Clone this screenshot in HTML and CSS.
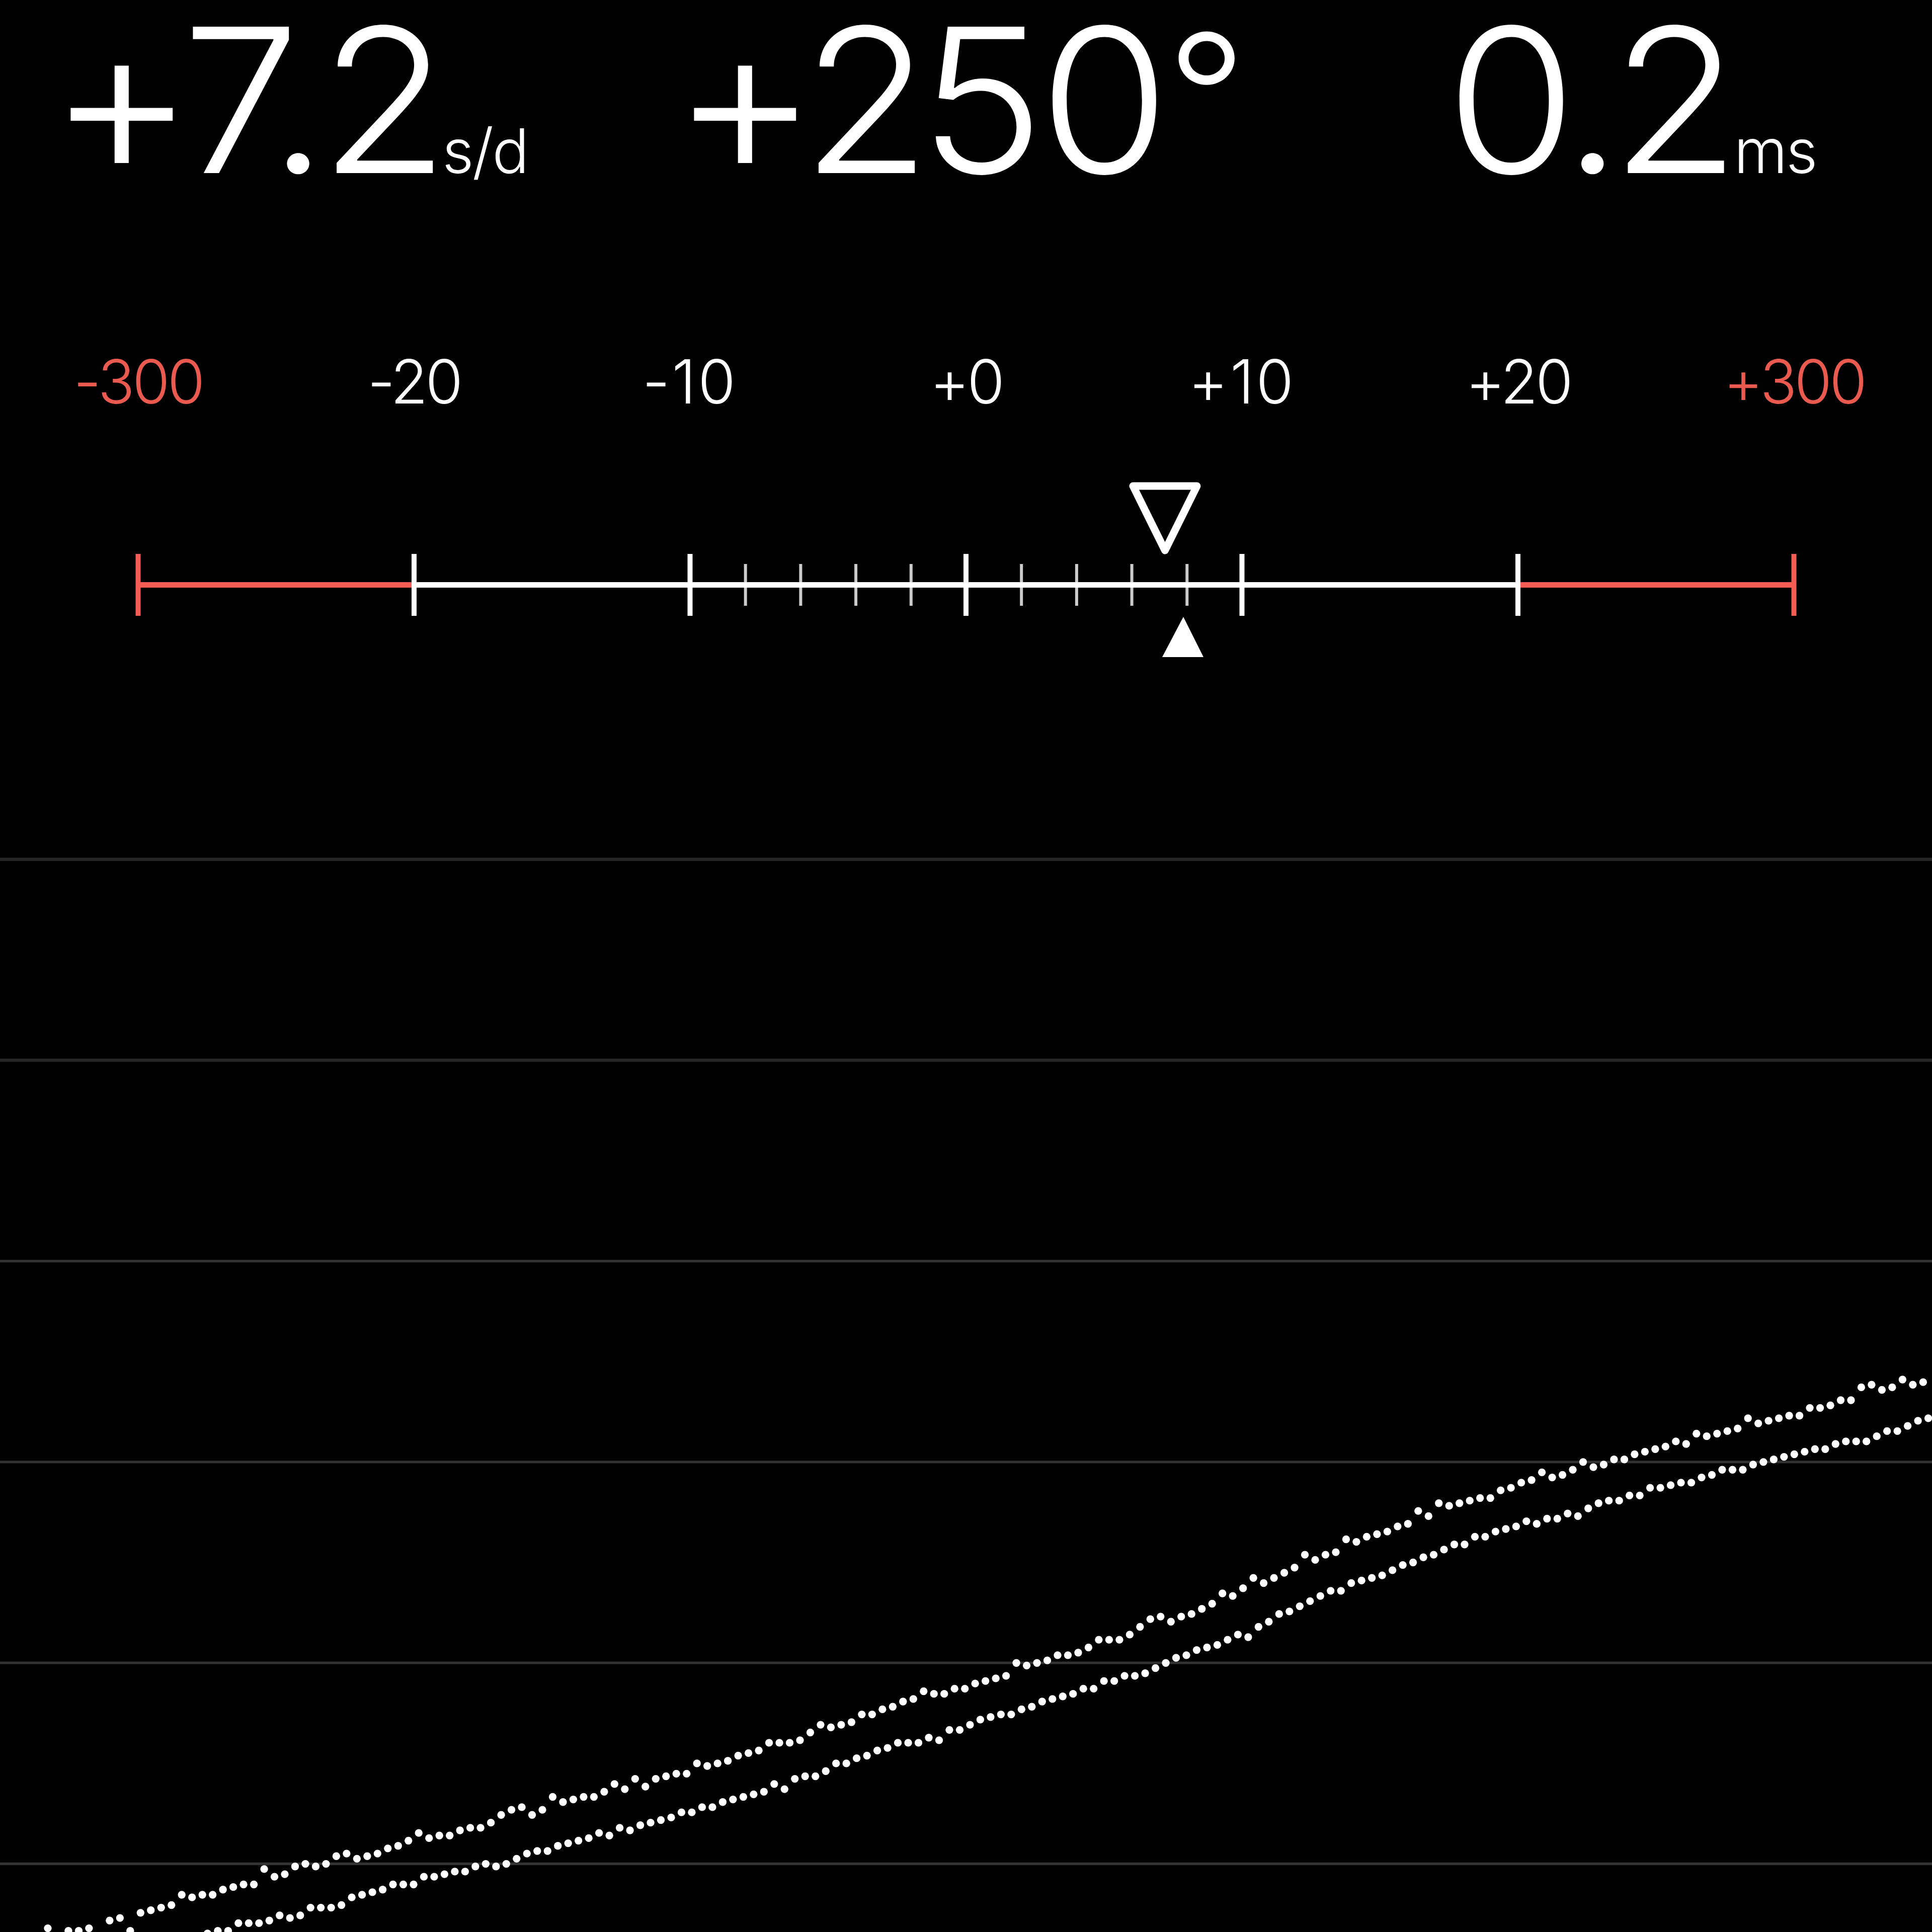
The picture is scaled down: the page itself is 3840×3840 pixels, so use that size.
FILE: index.html
```html
<!DOCTYPE html>
<html lang="en">
<head>
    <meta charset="UTF-8">
    <meta name="viewport" content="width=device-width, initial-scale=1.0">
    <title>Timegrapher</title>
    <link rel="stylesheet" href="styles.css">
</head>
<body>
    <div class="readouts">
        <div class="readout rate"><span class="value"><span class="plus">+</span>7.<span class="decimal">2</span></span><span class="unit">s/d</span></div>
        <div class="readout amplitude"><span class="value"><span class="plus">+</span>2<span class="five">5</span>0<span class="degree">°</span></span></div>
        <div class="readout beat-error"><span class="value">0.<span class="decimal">2</span></span><span class="unit">ms</span></div>
    </div>

    <div class="labels">
        <span class="limit">-300</span>
        <span>-20</span>
        <span class="ten">-10</span>
        <span>+0</span>
        <span class="ten">+10</span>
        <span>+20</span>
        <span class="limit">+300</span>
    </div>

    <svg class="scale" viewBox="0 900 3840 500">
        <g id="minorTicks" class="minor"></g>
        <path class="axis limit-line" d="M274 1162.500H823M3017 1162.500H3566"/>
        <path class="axis" d="M823 1162.500H3017"/>
        <path class="major limit-line" d="M274.500 1101V1224M3565.500 1101V1224"/>
        <path class="major" d="M823 1101V1224M1371.500 1101V1224M1920 1101V1224M2468.500 1101V1224M3017 1101V1224"/>
        <path class="average" d="M2252 966H2379L2315.500 1094Z"/>
        <path class="current" d="M2352 1226L2392 1306H2310Z"/>
    </svg>

    <svg class="trace" viewBox="0 300 750 450">
        <g id="gridLines" class="grid"></g>
        <g id="dots" class="dots"></g>
    </svg>

    <script>
        const SVG_NS = 'http://www.w3.org/2000/svg';

        // one value per beat, 0 = no beat detected
        const tick = [
            748, 0, 749, 749, 748, 0, 745, 744, 749, 742, 741, 740, 739, 735, 736, 735, 735, 733, 732, 731,
            731, 725, 728, 727, 724, 723, 724, 723, 720, 719, 721, 720, 719, 717, 716, 714, 711, 713, 712, 712,
            710, 709, 709, 707, 704, 702, 701, 704, 702, 697, 699, 698, 697, 697, 695, 692, 694, 690, 693, 690,
            689, 688, 688, 684, 685, 684, 683, 681, 680, 679, 676, 676, 676, 675, 672, 669, 670, 669, 668, 665,
            665, 663, 662, 660, 659, 656, 657, 657, 655, 655, 653, 652, 651, 650, 645, 646, 645, 644, 642, 642,
            641, 639, 636, 636, 636, 634, 631, 628, 627, 629, 627, 626, 624, 622, 618, 619, 616, 612, 614, 612,
            610, 608, 603, 605, 603, 602, 597, 598, 596, 595, 594, 592, 591, 586, 588, 583, 584, 583, 582, 581,
            581, 578, 577, 575, 574, 571, 573, 572, 570, 567, 569, 568, 566, 566, 564, 563, 562, 561, 559, 560,
            556, 557, 556, 555, 554, 550, 552, 551, 550, 549, 549, 546, 546, 545, 543, 543, 538, 537, 539, 538,
            535, 537, 536
        ];
        const tock = [
            750, 749, 749, 746, 746, 746, 745, 743, 744, 743, 740, 740, 740, 739, 736, 735, 734, 733, 731, 731,
            731, 728, 728, 727, 726, 726, 724, 723, 724, 723, 721, 719, 718, 718, 716, 715, 714, 713, 711, 712,
            709, 710, 708, 707, 706, 705, 703, 703, 701, 701, 699, 698, 697, 696, 695, 692, 694, 690, 689, 689,
            687, 684, 684, 682, 681, 679, 678, 676, 676, 676, 674, 675, 671, 671, 669, 667, 666, 665, 665, 663,
            662, 660, 659, 658, 657, 655, 655, 652, 652, 650, 650, 649, 647, 645, 643, 642, 640, 639, 638, 636,
            634, 635, 631, 629, 626, 625, 623, 621, 619, 617, 617, 614, 613, 612, 611, 609, 607, 606, 604, 603,
            601, 599, 599, 596, 596, 594, 593, 592, 590, 591, 589, 589, 587, 588, 585, 583, 582, 582, 580, 580,
            577, 577, 576, 575, 575, 573, 572, 570, 570, 570, 568, 567, 566, 565, 564, 563, 562, 562, 560, 559,
            559, 559, 557, 555, 555, 553, 551, 550
        ];

        function add(parent, name, attrs) {
            const el = document.createElementNS(SVG_NS, name);
            for (const key in attrs) el.setAttribute(key, attrs[key]);
            parent.appendChild(el);
        }

        function drawSeries(values, startX) {
            const dots = document.getElementById('dots');
            values.forEach((y, i) => {
                if (y) add(dots, 'circle', { cx: startX + i * 4, cy: y + 0.55, r: 1.5 });
            });
        }

        const grid = document.getElementById('gridLines');
        for (let y = 333.6; y < 750; y += 77.98) {
            add(grid, 'line', { x1: 0, x2: 750, y1: y, y2: y });
        }

        const minor = document.getElementById('minorTicks');
        for (let i = -4; i <= 4; i++) {
            const x = 1920.5 + i * 109.7;
            if (i) add(minor, 'line', { x1: x, x2: x, y1: 1121, y2: 1204 });
        }

        drawSeries(tick, 18.55);
        drawSeries(tock, 80.55);
    </script>
</body>
</html>
```
FILE: styles.css
```css
body {
    margin: 0;
    background-color: #000;
    color: #fff;
    font-family: Inter, "Liberation Sans", sans-serif;
    font-weight: 300;
}

svg {
    display: block;
    width: 100%;
}

.readouts {
    display: grid;
    grid-template-columns: repeat(3, 1fr);
    height: 688px;
}
.readout {
    display: flex;
    align-items: baseline;
    height: 396px;
    line-height: 396px;
    white-space: nowrap;
}
.rate {
    padding-left: 95px;
}
.amplitude {
    padding-left: 54px;
}
.beat-error {
    padding-left: 314px;
}
.value {
    font-size: 400px;
    letter-spacing: -10px;
    transform: scaleX(1.05);
    transform-origin: left;
}
.beat-error .value {
    letter-spacing: -16px;
}
.plus {
    font-size: 428px;
    line-height: 0;
    vertical-align: -5px;
    margin-right: -16px;
}
.amplitude .plus {
    margin-right: -23px;
}
.decimal {
    margin-left: -6px;
}
.five {
    margin-left: -13px;
}
.degree {
    font-size: 334px;
    line-height: 0;
    vertical-align: 36px;
    margin-left: 4px;
}
.unit {
    font-size: 122px;
    letter-spacing: -3px;
}
.rate .unit {
    margin-left: 34px;
}
.beat-error .unit {
    margin-left: 31px;
}

.labels {
    display: grid;
    grid-template-columns: repeat(7, 1fr);
    height: 212px;
    font-size: 121px;
    line-height: 140px;
    text-align: center;
    letter-spacing: -5px;
}
.limit {
    color: #ea5a4f;
}
.ten {
    letter-spacing: 4px;
}

.scale {
    height: 500px;
    fill: none;
    stroke: #fff;
}
.axis {
    stroke-width: 11;
}
.major {
    stroke-width: 10;
}
.minor {
    stroke: #ccc;
    stroke-width: 6;
}
.limit-line {
    stroke: #f45d53;
}
.average {
    stroke-width: 15;
    stroke-linejoin: round;
}
.current {
    fill: #fff;
    stroke: none;
}

.trace {
    height: 2304px;
    margin-top: 136px;
}
.grid {
    stroke: #323232;
    stroke-width: 1;
}
.grid line:nth-child(-n+2) {
    stroke: #262626;
    stroke-width: 1.3;
}
.dots {
    fill: #fff;
}
```
